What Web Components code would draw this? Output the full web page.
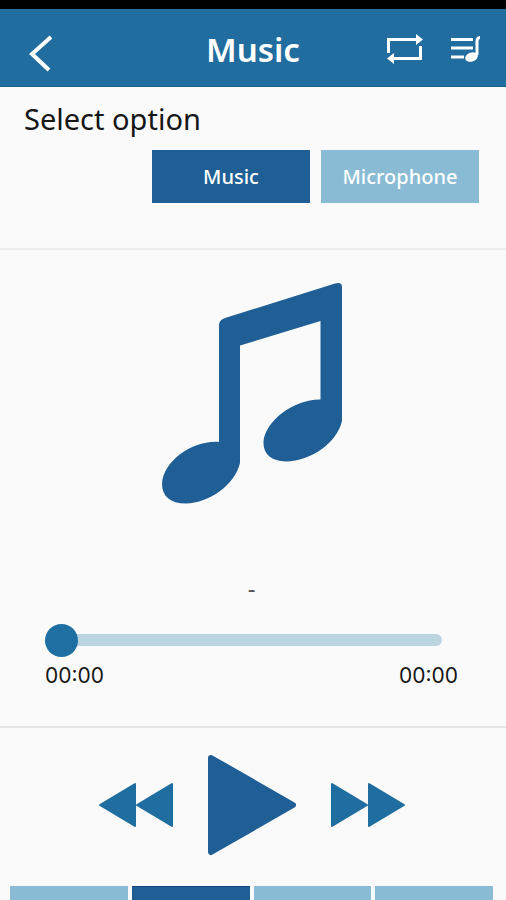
<!DOCTYPE html>
<html lang="en">
<head>
<meta charset="utf-8">
<meta name="viewport" content="width=device-width, initial-scale=1">
<title>Music</title>
<style>
  html, body { margin: 0; height: 100%; }
  body { background: #fafafa; color: #161616; font-family: "Noto Sans", "Open Sans", sans-serif; }
</style>
</head>
<body>
<music-app></music-app>
<script>
const define = (name, html, setup) => {
  customElements.define(name, class extends HTMLElement {
    constructor() {
      super();
      const root = this.attachShadow({ mode: "open" });
      const template = document.createElement("template");
      template.innerHTML = html;
      root.append(template.content.cloneNode(true));
    }
    connectedCallback() { if (setup) setup(this, this.shadowRoot); }
  });
};

define("app-header", `
  <style>
    :host { display: block; border-top: 9px solid #000; background: #216d9f; color: #fff; }
    header { display: grid; grid-template-columns: 1fr auto 1fr; align-items: center; height: 78px; padding: 0 24px; border-bottom: 1px solid #176087; box-sizing: border-box; }
    h1 { margin: 0; padding-top: 4px; font-size: 33px; line-height: 40px; font-weight: 600; }
    .actions { display: flex; justify-content: flex-end; gap: 26px; }
    button { border: 0; padding: 0; background: none; color: inherit; display: block; }
    .back { justify-self: start; padding-top: 12px; }
    svg { display: block; }
  </style>
  <header>
    <button class="back" aria-label="Back">
      <svg width="34" height="40" viewBox="0 0 34 40" fill="none" stroke="currentColor" stroke-width="4"><path d="M27 3 8 20 25 36"/></svg>
    </button>
    <h1><slot></slot></h1>
    <div class="actions">
      <button aria-label="Repeat">
        <svg width="40" height="32" viewBox="0 0 40 32" fill="none" stroke="currentColor" stroke-width="3"><path d="M4.500 21V7.500H34M36.500 14V26.500H8"/><path fill="currentColor" stroke="none" d="M32 2 39 7.500 32 13ZM10 21 3 26.500 10 32Z"/></svg>
      </button>
      <button aria-label="Playlist">
        <svg width="32" height="32" viewBox="0 0 32 32" fill="none" stroke="currentColor" stroke-width="3"><path d="M1 7.500H23M1 16H23M1 25H14"/><path d="M30 5.500C28 5.500 27 7 27 10V23"/><ellipse cx="21.500" cy="25" rx="6.500" ry="4.500" transform="rotate(-20 21.500 25)" fill="currentColor" stroke="none"/></svg>
      </button>
    </div>
  </header>`);

define("choice-button", `
  <style>
    :host { display: block; flex: 0 1 158px; }
    button { width: 100%; height: 53px; border: 0; padding: 0; background: #89bbd4; color: #fff; font: 500 20px/28px "Noto Sans", sans-serif; }
    :host([active]) button { background: #1f5f96; }
  </style>
  <button type="button"><slot></slot></button>`,
  (host, root) => root.querySelector("button").setAttribute("aria-pressed", host.hasAttribute("active")));

define("option-picker", `
  <style>
    :host { display: block; padding: 12px 27px 45px 24px; border-bottom: 2px solid #ececed; }
    h2 { margin: 0 0 11px; font-size: 29px; line-height: 40px; font-weight: 400; }
    .choices { display: flex; justify-content: flex-end; gap: 11px; }
  </style>
  <h2>Select option</h2>
  <div class="choices"><slot></slot></div>`);

define("track-progress", `
  <style>
    :host { display: block; padding: 0 48px 0 45px; }
    input { appearance: none; display: block; width: calc(100% - 16px); height: 34px; margin: 0; background: none; }
    input::-webkit-slider-runnable-track { height: 12px; border-radius: 6px; background: #bbd5e0; }
    input::-webkit-slider-thumb { appearance: none; width: 33px; height: 33px; margin-top: -10px; border-radius: 50%; background: #1f6fa2; }
    div { display: flex; justify-content: space-between; font: 21px/38px Inter, "Noto Sans", sans-serif; }
  </style>
  <input type="range" min="0" max="100" value="0" aria-label="Track position">
  <div><span>00:00</span><span>00:00</span></div>`);

define("now-playing", `
  <style>
    :host { display: flex; flex-direction: column; border-bottom: 2px solid #e5e6e7; padding: 32px 0 31px; }
    svg { display: block; align-self: center; }
    p { margin: 68px 0 19px; padding-right: 3px; text-align: center; font-size: 24px; line-height: 32px; color: #555; }
  </style>
  <svg width="182" height="222" viewBox="162 282 182 222" fill="#1f5f96" role="img" aria-label="Music note">
    <path d="M219 443V325Q219 320 225 318L335 283.500Q342 281.500 342 287V421C337 443 311 461 286 461.500C271 461 263 454 263.500 442C265 421 294 399 320.500 399.500V321L240 345.500V463C235 485 209 503 186 503.500C170 503.500 162 496 162 484C163 461 193 440 219 442Z"/>
  </svg>
  <p><slot></slot></p>
  <track-progress></track-progress>`);

define("transport-controls", `
  <style>
    :host { display: flex; justify-content: center; align-items: center; gap: 33px; padding: 26px 2px 30px 0; }
    button { border: 0; padding: 0; background: none; color: #206e9f; }
    .play { color: #1f5f96; }
    svg { display: block; fill: currentColor; stroke: currentColor; stroke-linejoin: round; }
  </style>
  <button aria-label="Previous"><svg width="76" height="46" viewBox="0 0 76 46" stroke-width="2"><path d="M2 23 37 2V44ZM39 23 74 2V44Z"/></svg></button>
  <button class="play" aria-label="Play"><svg width="90" height="102" viewBox="0 0 90 102" stroke-width="6"><path d="M4 4 86 51 4 98Z"/></svg></button>
  <button aria-label="Next"><svg width="76" height="46" viewBox="0 0 76 46" stroke-width="2"><path d="M74 23 39 2V44ZM37 23 2 2V44Z"/></svg></button>`);

define("bottom-tabs", `
  <style>
    :host { display: grid; flex: 1; min-height: 14px; padding: 0 13px 0 10px; }
    nav { display: grid; grid-template-columns: repeat(4, 1fr); gap: 4px; }
    button { border: 0; padding: 0; background: #89bbd4; }
    .active { background: #1f5f96; border-top: 1px solid #124680; }
  </style>
  <nav>
    <button aria-label="Tab 1"></button>
    <button class="active" aria-label="Tab 2" aria-current="page"></button>
    <button aria-label="Tab 3"></button>
    <button aria-label="Tab 4"></button>
  </nav>`);

define("music-app", `
  <style>
    :host { display: flex; flex-direction: column; min-height: 100vh; }
  </style>
  <app-header>Music</app-header>
  <option-picker>
    <choice-button active>Music</choice-button>
    <choice-button>Microphone</choice-button>
  </option-picker>
  <now-playing>-</now-playing>
  <transport-controls></transport-controls>
  <bottom-tabs></bottom-tabs>`);
</script>
</body>
</html>
